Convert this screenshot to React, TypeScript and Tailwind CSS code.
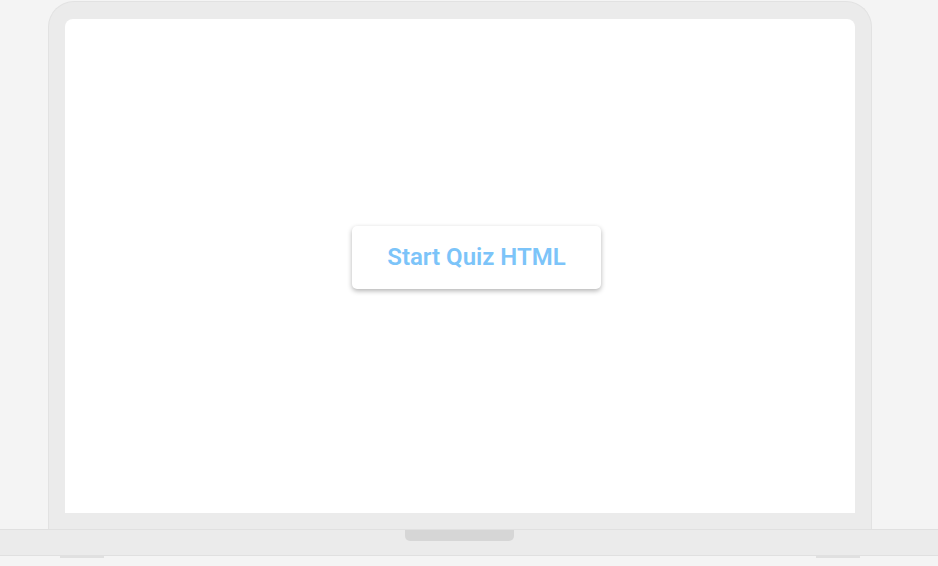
export default function App() {
  return (
    <div
      className="flex h-[566px] w-[938px] flex-col overflow-hidden bg-[#f4f4f4]"
      style={{ fontFamily: "Roboto, 'Liberation Sans', sans-serif" }}
    >
      {/* lid */}
      <div className="ml-[48px] mt-[1px] flex h-[528px] w-[824px] flex-col rounded-t-[26px] border border-b-0 border-[#e2e2e2] bg-[#ebebeb] px-[16px] pb-[16px] pt-[17px]">
        <div className="flex flex-1 items-center justify-center rounded-t-[8px] bg-white pb-[18px] pl-[33px]">
          <button className="h-[63px] w-[249px] rounded-[5px] bg-white text-[24px] font-semibold text-[#7cc4f9] shadow-[0_2px_5px_rgba(0,0,0,0.3)]">
            Start Quiz HTML
          </button>
        </div>
      </div>
      {/* base */}
      <div className="h-[27px] w-full shrink-0 border-y border-[#e0e0e0] bg-[#ebebeb]">
        <div className="ml-[405px] h-[11px] w-[109px] rounded-b-[5px] bg-[#d6d6d6]" />
      </div>
      {/* feet */}
      <div className="flex justify-between pl-[60px] pr-[78px]">
        <div className="h-[2px] w-[44px] bg-[#e0e0e0]" />
        <div className="h-[2px] w-[44px] bg-[#e0e0e0]" />
      </div>
    </div>
  );
}
